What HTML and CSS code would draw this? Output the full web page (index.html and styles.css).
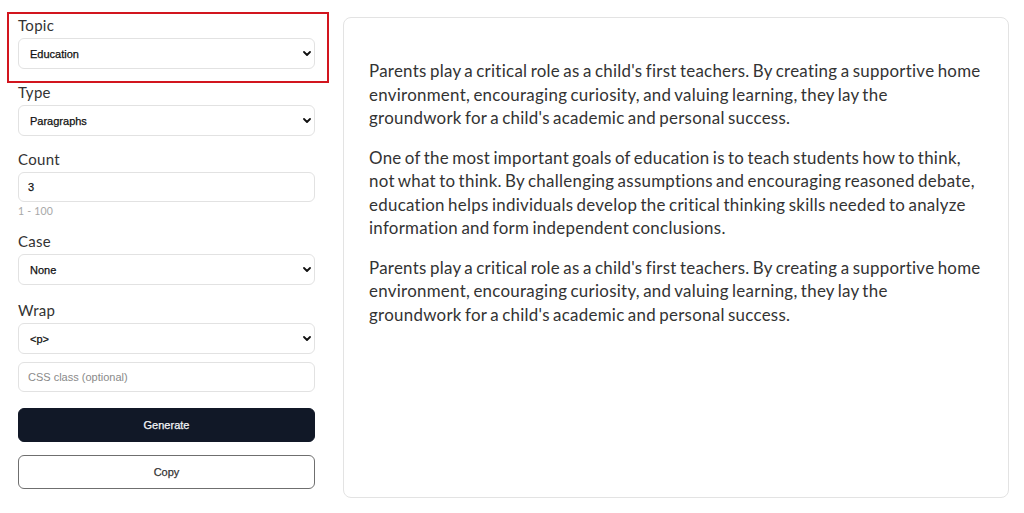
FILE: index.html
```html
<!DOCTYPE html>
<html lang="en">
<head>
<meta charset="utf-8">
<title>Text Generator</title>
<link rel="stylesheet" href="styles.css">
</head>
<body>
<div class="app">
  <aside class="controls">
    <div class="field field-highlight">
      <label class="label" for="topic">Topic</label>
      <div class="select-wrap">
        <select id="topic" class="control select"><option>Education</option></select>
        <svg class="chev" viewBox="0 0 8 5" width="8" height="5"><path d="M1 1 L4 4 L7 1" fill="none" stroke="#111" stroke-width="1.8" stroke-linecap="round" stroke-linejoin="round"/></svg>
      </div>
    </div>
    <div class="field">
      <label class="label" for="type">Type</label>
      <div class="select-wrap">
        <select id="type" class="control select"><option>Paragraphs</option></select>
        <svg class="chev" viewBox="0 0 8 5" width="8" height="5"><path d="M1 1 L4 4 L7 1" fill="none" stroke="#111" stroke-width="1.8" stroke-linecap="round" stroke-linejoin="round"/></svg>
      </div>
    </div>
    <div class="field">
      <label class="label" for="count">Count</label>
      <input id="count" class="control input" type="text" value="3">
      <div class="hint">1 - 100</div>
    </div>
    <div class="field field-case">
      <label class="label" for="case">Case</label>
      <div class="select-wrap">
        <select id="case" class="control select"><option>None</option></select>
        <svg class="chev" viewBox="0 0 8 5" width="8" height="5"><path d="M1 1 L4 4 L7 1" fill="none" stroke="#111" stroke-width="1.8" stroke-linecap="round" stroke-linejoin="round"/></svg>
      </div>
    </div>
    <div class="field field-tight">
      <label class="label" for="wrap">Wrap</label>
      <div class="select-wrap">
        <select id="wrap" class="control select"><option>&lt;p&gt;</option></select>
        <svg class="chev" viewBox="0 0 8 5" width="8" height="5"><path d="M1 1 L4 4 L7 1" fill="none" stroke="#111" stroke-width="1.8" stroke-linecap="round" stroke-linejoin="round"/></svg>
      </div>
    </div>
    <div class="field field-css">
      <input class="control input placeholder-input" type="text" placeholder="CSS class (optional)">
    </div>
    <button class="btn btn-primary" type="button">Generate</button>
    <button class="btn btn-outline" type="button">Copy</button>
  </aside>
  <main class="output">
    <p>Parents play a critical role as a child's first teachers. By creating a supportive home environment, encouraging curiosity, and valuing learning, they lay the groundwork for a child's academic and personal success.</p>
    <p>One of the most important goals of education is to teach students how to think, not what to think. By challenging assumptions and encouraging reasoned debate, education helps individuals develop the critical thinking skills needed to analyze information and form independent conclusions.</p>
    <p>Parents play a critical role as a child's first teachers. By creating a supportive home environment, encouraging curiosity, and valuing learning, they lay the groundwork for a child's academic and personal success.</p>
  </main>
</div>
</body>
</html>
```

FILE: styles.css
```css
* { box-sizing: border-box; }

html, body {
  margin: 0;
  padding: 0;
  background: #ffffff;
}

body {
  font-family: "Lato", "Open Sans", sans-serif;
  color: #333;
}

.app {
  display: flex;
  gap: 28px;
  padding: 15px 15px 15px 18px;
  height: 513px;
}

.controls {
  width: 297px;
  flex: none;
  display: flex;
  flex-direction: column;
}

.field {
  display: flex;
  flex-direction: column;
  margin-bottom: 13px;
}

.field-case { margin-bottom: 15px; }
.field-tight { margin-bottom: 8px; }
.field-css { margin-bottom: 16px; }

.field-highlight { position: relative; }
.field-highlight::after {
  content: "";
  position: absolute;
  top: -3px;
  left: -11px;
  right: -14px;
  bottom: -14px;
  border: 2px solid #d2151e;
  pointer-events: none;
}

.label {
  font-family: "Lato", "Open Sans", sans-serif;
  font-size: 15px;
  letter-spacing: 0.3px;
  line-height: 20px;
  color: #333;
  margin-bottom: 3px;
}

.control {
  width: 100%;
  height: 31px;
  border: 1px solid #e2e2e2;
  border-radius: 6px;
  background: #fff;
  font-family: "Liberation Sans", Arial, sans-serif;
  font-size: 11px;
  color: #111;
  -webkit-text-stroke: 0.25px #111;
  padding: 0 11px;
  margin: 0;
  outline: none;
}

.select {
  appearance: none;
  -webkit-appearance: none;
}

.input {
  height: 30px;
  padding: 0 9px;
}

.placeholder-input { -webkit-text-stroke: 0; }
.placeholder-input::placeholder { color: #8a8a8a; }

.select-wrap {
  position: relative;
}

.chev {
  position: absolute;
  right: 4px;
  top: 13px;
  width: 8px;
  height: 5px;
}

.hint {
  font-family: "Lato", "Open Sans", sans-serif;
  font-size: 10.5px;
  letter-spacing: 0.2px;
  line-height: 14px;
  color: #a8a8a8;
  margin-top: 2px;
}

.btn {
  width: 100%;
  height: 34px;
  border-radius: 6px;
  font-family: "Liberation Sans", Arial, sans-serif;
  font-size: 11px;
  -webkit-text-stroke: 0.25px currentColor;
  cursor: pointer;
}

.btn-primary {
  background: #111827;
  border: 1px solid #111827;
  color: #f3f4f6;
  margin-bottom: 13px;
}

.btn-outline {
  background: #fff;
  border: 1px solid #6f6f6f;
  color: #333;
}

.output {
  flex: 1;
  margin-top: 2px;
  height: 481px;
  border: 1px solid #e3e3e3;
  border-radius: 8px;
  padding: 25px 26.5px 25px 25px;
  font-family: "Lato", "Open Sans", sans-serif;
  font-size: 16.9px;
  letter-spacing: 0.28px;
  word-spacing: -1.3px;
  line-height: 23.5px;
  color: #333;
}

.output p {
  margin: 16px 0;
}
```
